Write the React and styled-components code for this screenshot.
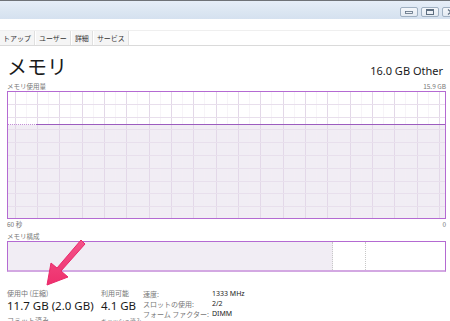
import React from "react";
import styled, { createGlobalStyle } from "styled-components";

const Global = createGlobalStyle`
  html, body { margin: 0; padding: 0; background: #ffffff; }
  body { width: 450px; height: 321px; overflow: hidden; font-family: "Noto Sans CJK JP", "Noto Sans", sans-serif; }
`;

const Window = styled.div`
  position: relative;
  width: 450px;
  height: 321px;
  overflow: hidden;
  display: flex;
  flex-direction: column;
  background: #fff;
`;

const TitleBar = styled.div`
  flex: none;
  height: 19px;
  box-sizing: border-box;
  border-top: 1px solid #6f7378;
  background: linear-gradient(180deg, #e6eef8 0%, #dbe6f2 60%, #d5e1ef 100%);
  display: flex;
  justify-content: flex-end;
  align-items: flex-start;
  padding-top: 6px;
  gap: 3px;
  margin-right: -10px;
`;

const WinButton = styled.div`
  width: 18px;
  height: 10px;
  border: 1px solid #9fb0c2;
  border-radius: 2px;
  background: linear-gradient(180deg, #f4f7fb, #e3eaf2);
  display: flex;
  align-items: center;
  justify-content: center;
  box-sizing: border-box;
`;

const MenuStrip = styled.div`
  flex: none;
  height: 11px;
  border-bottom: 1px solid #efefef;
`;

const TabStrip = styled.div`
  flex: none;
  height: 14px;
  display: flex;
  align-items: stretch;
  border-bottom: 1px solid #dadada;
  margin-left: -1px;
`;

const Tab = styled.div`
  padding: 0 3px;
  font-size: 7px;
  line-height: 14px;
  color: #333;
  background: #f5f5f5;
  border-right: 1px solid #e0e0e0;
  border-left: 1px solid #fff;
  white-space: nowrap;
`;

const Content = styled.div`
  flex: none;
  padding: 0 4px 0 7px;
  display: flex;
  flex-direction: column;
`;

const HeaderRow = styled.div`
  display: flex;
  justify-content: space-between;
  align-items: flex-end;
  margin-top: 10px;
  height: 22px;
`;

const Title = styled.div`
  font-size: 20px;
  line-height: 22px;
  color: #1a1a1a;
`;

const Subtitle = styled.div`
  font-family: "Noto Sans", sans-serif;
  font-size: 11px;
  line-height: 14px;
  color: #1a1a1a;
  margin-right: 3px;
`;

const LabelRow = styled.div`
  display: flex;
  justify-content: space-between;
  font-size: 6.5px;
  line-height: 9px;
  color: #777;
  margin-top: ${(p) => p.$top || 0}px;
`;

const Graph = styled.div`
  flex: none;
  height: 128px;
  border: 1px solid #b46ad2;
  box-sizing: border-box;
  background: #fff;
  overflow: hidden;
`;

const CompBar = styled.div`
  flex: none;
  height: 31px;
  border: 1px solid #b46ad2;
  border-bottom: 2px solid #d3a8e2;
  box-sizing: border-box;
  display: flex;
`;

const Segment = styled.div`
  flex: ${(p) => p.$flex};
  background: ${(p) => p.$bg};
  border-right: ${(p) => (p.$divider ? "1px dotted #c8c8c8" : "none")};
`;

const Stats = styled.div`
  display: flex;
  align-items: flex-start;
  margin-top: 17px;
`;

const StatCol = styled.div`
  flex: none;
  width: ${(p) => p.$w}px;
  display: flex;
  flex-direction: column;
`;

const StatLabel = styled.div`
  font-size: ${(p) => p.$size || 7}px;
  line-height: 9px;
  color: #777;
  white-space: nowrap;
  margin-top: ${(p) => p.$top || 0}px;
`;

const StatValue = styled.div`
  font-family: "Noto Sans", sans-serif;
  font-size: 11.5px;
  line-height: 16px;
  color: #1a1a1a;
  white-space: nowrap;
`;

const Props = styled.div`
  display: grid;
  grid-template-columns: 69px auto;
  align-content: start;
  row-gap: 0;
  font-size: 7px;
  line-height: 10px;
`;

const PropKey = styled.div`
  color: #777;
  white-space: nowrap;
`;

const PropVal = styled.div`
  color: #222;
  font-family: "Noto Sans", sans-serif;
`;

const Arrow = styled.svg`
  position: absolute;
  left: 39px;
  top: 237px;
`;

function MemoryGraph() {
  const w = 437;
  const h = 126;
  const vx = [];
  for (let x = 6.5; x < w; x += 22.35) vx.push(Math.round(x) + 0.5);
  const hy = [];
  for (let i = 1; i < 10; i++) hy.push(Math.round(i * 12.8) - 0.5);
  const lineY = 32.5;
  return (
    <svg width={w} height={h} style={{ display: "block" }}>
      <rect x="0" y={lineY} width={w} height={h - lineY} fill="#f1edf4" />
      {vx.map((x) => (
        <line key={"f" + x} x1={x + 11} y1="0" x2={x + 11} y2={h} stroke="#f3eef5" strokeWidth="1" opacity="0.6" />
      ))}
      {vx.map((x) => (
        <line key={"v" + x} x1={x} y1="0" x2={x} y2={h} stroke="#e3d8e8" strokeWidth="1" />
      ))}
      {hy.map((y) => (
        <line key={"h" + y} x1="0" y1={y} x2={w} y2={y} stroke="#e8dfec" strokeWidth="1" />
      ))}
      <line x1="0" y1={lineY} x2="28" y2={lineY} stroke="#c48fd8" strokeWidth="1" strokeDasharray="1 1" />
      <line x1="28" y1={lineY} x2={w} y2={lineY} stroke="#9c5cbf" strokeWidth="1" />
    </svg>
  );
}

export default function App() {
  return (
    <Window>
      <Global />
      <TitleBar>
        <WinButton>
          <svg width="8" height="3"><rect x="0.5" y="0.5" width="7" height="2" fill="none" stroke="#5d6e80" strokeWidth="0.8" /></svg>
        </WinButton>
        <WinButton>
          <svg width="8" height="6"><rect x="0.5" y="0.5" width="7" height="5" fill="none" stroke="#5d6e80" strokeWidth="1" /><line x1="0.5" y1="1.5" x2="7.5" y2="1.5" stroke="#5d6e80" /></svg>
        </WinButton>
        <WinButton>
          <svg width="8" height="6"><path d="M1 0.5 L7 5.5 M7 0.5 L1 5.5" stroke="#5d6e80" strokeWidth="1.2" /></svg>
        </WinButton>
      </TitleBar>
      <MenuStrip />
      <TabStrip>
        <Tab>トアップ</Tab>
        <Tab>ユーザー</Tab>
        <Tab>詳細</Tab>
        <Tab>サービス</Tab>
      </TabStrip>
      <Content>
        <HeaderRow>
          <Title>メモリ</Title>
          <Subtitle>16.0 GB Other</Subtitle>
        </HeaderRow>
        <LabelRow $top={4}>
          <span>メモリ使用量</span>
          <span>15.9 GB</span>
        </LabelRow>
        <Graph>
          <MemoryGraph />
        </Graph>
        <LabelRow $top={1}>
          <span>60 秒</span>
          <span>0</span>
        </LabelRow>
        <LabelRow $top={3}>
          <span>メモリ構成</span>
        </LabelRow>
        <CompBar>
          <Segment $flex="326" $bg="#f1edf4" $divider />
          <Segment $flex="32" $bg="#ffffff" $divider />
          <Segment $flex="80" $bg="#ffffff" />
        </CompBar>
        <Stats>
          <StatCol $w={94}>
            <StatLabel>使用中 (圧縮)</StatLabel>
            <StatValue>11.7 GB (2.0 GB)</StatValue>
            <StatLabel $top={2}>コミット済み</StatLabel>
          </StatCol>
          <StatCol $w={42}>
            <StatLabel>利用可能</StatLabel>
            <StatValue>4.1 GB</StatValue>
            <StatLabel $top={2} $size={5.8}>キャッシュ済み</StatLabel>
          </StatCol>
          <Props>
            <PropKey>速度:</PropKey>
            <PropVal>1333 MHz</PropVal>
            <PropKey>スロットの使用:</PropKey>
            <PropVal>2/2</PropVal>
            <PropKey>フォーム ファクター:</PropKey>
            <PropVal>DIMM</PropVal>
          </Props>
        </Stats>
      </Content>
      <Arrow width="50" height="54" viewBox="0 0 50 54">
        <defs>
          <linearGradient id="ag" x1="0" y1="0" x2="0" y2="1">
            <stop offset="0" stopColor="#f4548a" />
            <stop offset="1" stopColor="#ee2f6c" />
          </linearGradient>
        </defs>
        <polygon
          points="42,3 46,7 22,34 29,40 8,48 12,26 18,31"
          fill="url(#ag)"
          stroke="#e9286a"
          strokeWidth="1"
          strokeLinejoin="round"
        />
      </Arrow>
    </Window>
  );
}
